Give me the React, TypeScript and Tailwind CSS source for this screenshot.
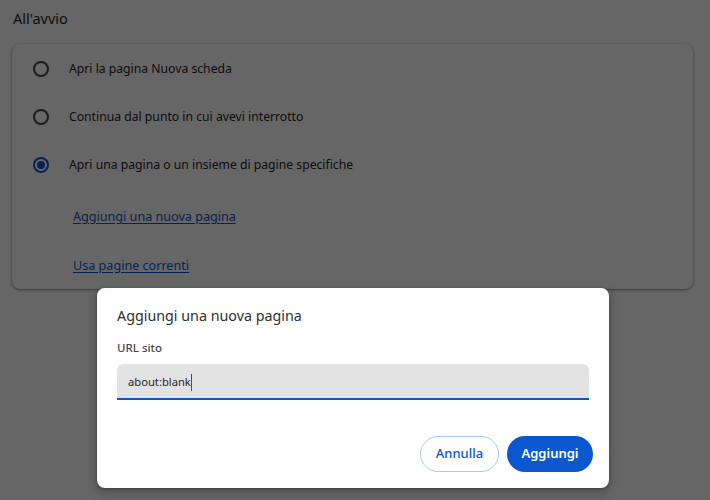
import React from "react";

function Radio({ checked }: { checked?: boolean }) {
  return (
    <span
      className={
        "flex h-4 w-4 items-center justify-center rounded-full border-2 " +
        (checked ? "border-[#0b57d0]" : "border-[#474747]")
      }
    >
      {checked && <span className="h-2 w-2 rounded-full bg-[#0b57d0]" />}
    </span>
  );
}

export default function App() {
  const rows = [
    { label: "Apri la pagina Nuova scheda", checked: false },
    { label: "Continua dal punto in cui avevi interrotto", checked: false },
    { label: "Apri una pagina o un insieme di pagine specifiche", checked: true },
  ];
  return (
    <div
      className="relative h-[500px] w-[710px] overflow-hidden bg-white text-[#1f1f1f]"
      style={{ fontFamily: '"Noto Sans", "Open Sans", sans-serif' }}
    >
      <div className="px-[12px] pt-[6px]">
        <div className="h-[38px] pl-[1px] text-[14.5px] leading-[24px]">All'avvio</div>
        <div className="w-[681px] rounded-lg bg-white pt-[1px] shadow-[0_1px_2px_rgba(0,0,0,0.3),0_1px_3px_1px_rgba(0,0,0,0.15)]">
          {rows.map((r) => (
            <div key={r.label} className="flex h-[48px] items-center pl-[21px]">
              <Radio checked={r.checked} />
              <span className="ml-[20px] text-[12.2px]">{r.label}</span>
            </div>
          ))}
          <div className="flex h-[54px] items-center pl-[61px] pt-[3px]">
            <span className="text-[12.6px] text-[#0b57d0] underline underline-offset-2">
              Aggiungi una nuova pagina
            </span>
          </div>
          <div className="flex h-[46px] items-center pl-[61px]">
            <span className="text-[12.6px] text-[#0b57d0] underline underline-offset-2">
              Usa pagine correnti
            </span>
          </div>
        </div>
      </div>

      <div className="absolute inset-0 bg-black/60" />

      <div className="absolute left-[97px] top-[288px] flex h-[200px] w-[512px] flex-col rounded-lg bg-white px-[20px] pt-[16px] shadow-[0_4px_8px_3px_rgba(0,0,0,0.15),0_1px_3px_rgba(0,0,0,0.3)]">
        <div className="text-[14.3px] leading-[24px] text-[#303030]">Aggiungi una nuova pagina</div>
        <div className="mt-[12px] text-[11.5px] font-medium leading-[16px] text-[#474747]">URL sito</div>
        <div className="mt-[8px] flex h-[36px] items-center rounded-t-[6px] border-b-2 border-[#0b57d0] bg-[#e3e3e3] pl-[11px] pt-[2px]">
          <span className="text-[11.2px] text-[#1f1f1f]">about:blank</span>
          <span className="h-[17px] w-px bg-[#0b57d0]" />
        </div>
        <div className="mt-auto mb-[16px] flex justify-end gap-[8px]">
          <button className="h-[36px] w-[79px] rounded-full border border-[#a8c7fa] bg-white text-[13px] font-medium text-[#0b57d0]">
            Annulla
          </button>
          <button className="-mr-[4px] h-[36px] w-[86px] rounded-full bg-[#0b57d0] text-[13px] font-semibold text-white">
            Aggiungi
          </button>
        </div>
      </div>
    </div>
  );
}
